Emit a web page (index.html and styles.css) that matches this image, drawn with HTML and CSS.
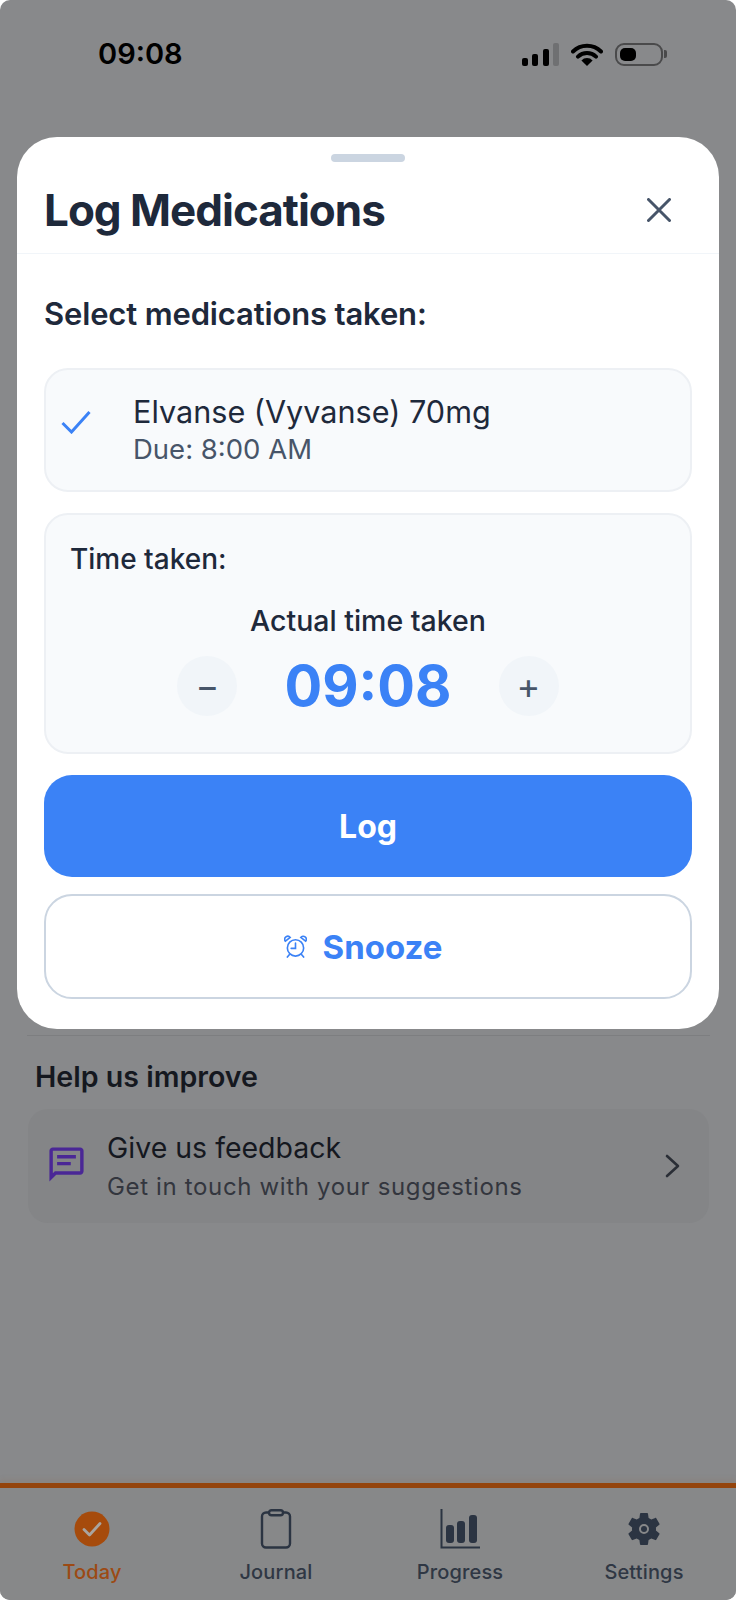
FILE: index.html
```html
<!DOCTYPE html>
<html lang="en">
<head>
    <meta charset="UTF-8">
    <meta name="viewport" content="width=device-width, initial-scale=1.0">
    <title>Log Medications</title>
    <link rel="stylesheet" href="styles.css">
</head>
<body>
    <div class="screen">
        <div class="status-bar">
            <span class="status-time">09:08</span>
            <div class="status-icons">
                <div class="signal">
                    <span class="bar bar-1"></span>
                    <span class="bar bar-2"></span>
                    <span class="bar bar-3"></span>
                    <span class="bar bar-4"></span>
                </div>
                <svg class="wifi" viewBox="0 0 32 23" width="32" height="23">
                    <path d="M2 8.5a20 20 0 0 1 28 0M7 13.6a13 13 0 0 1 18 0" fill="none" stroke="#000" stroke-width="4" stroke-linecap="round"/>
                    <path d="M16 23l-5.6-5.6a8 8 0 0 1 11.2 0z" fill="#000"/>
                </svg>
                <div class="battery"><span class="battery-fill"></span></div>
                <span class="battery-nub"></span>
            </div>
        </div>

        <section class="sheet">
            <div class="sheet-handle"></div>
            <header class="sheet-header">
                <h1>Log Medications</h1>
                <svg class="close-icon" viewBox="0 0 24 24" width="24" height="24">
                    <path d="M1.5 1.5l21 21M22.5 1.5l-21 21" fill="none" stroke="#475569" stroke-width="3" stroke-linecap="round"/>
                </svg>
            </header>
            <div class="sheet-body">
                <h2>Select medications taken:</h2>
                <div class="card med-card">
                    <svg class="check-icon" viewBox="0 0 30 24" width="30" height="24">
                        <path d="M1.5 13l9 9L28.500 2" fill="none" stroke="#3b82f6" stroke-width="3"/>
                    </svg>
                    <div>
                        <div class="med-name">Elvanse (Vyvanse) 70mg</div>
                        <div class="med-due">Due: 8:00 AM</div>
                    </div>
                </div>
                <div class="card time-card">
                    <div class="time-label">Time taken:</div>
                    <div class="time-sub">Actual time taken</div>
                    <div class="time-picker">
                        <span class="round-btn">&minus;</span>
                        <span class="time-value">09:08</span>
                        <span class="round-btn">+</span>
                    </div>
                </div>
                <button class="btn btn-log">Log</button>
                <button class="btn btn-snooze">
                    <svg viewBox="0 0 24 24" width="23" height="23" fill="none" stroke="#3b82f6" stroke-width="1.7" stroke-linecap="round">
                        <circle cx="12" cy="13.500" r="8.500"/>
                        <path d="M12 8.500v5.500H7.500M5.500 20.500L3.500 23M18.500 20.500l2 2.500"/>
                        <path d="M1.500 6.500a3 3 0 0 1 5-4zM22.500 6.500a3 3 0 0 0-5-4z"/>
                    </svg>
                    Snooze
                </button>
            </div>
        </section>

        <div class="bg-content">
            <h3>Help us improve</h3>
            <div class="feedback-card">
                <svg class="feedback-icon" viewBox="0 0 24 24" width="41" height="41" fill="#4a2796">
                    <path d="M20 2H4c-1.100 0-2 .9-2 2v18l4-4h14c1.100 0 2-.9 2-2V4c0-1.100-.9-2-2-2zm0 14H5.170L4 17.170V4h16v12z"/>
                    <path d="M6.500 6.500h11v2h-11zM6.500 10.500h8v2h-8z"/>
                </svg>
                <div class="feedback-text">
                    <div class="feedback-title">Give us feedback</div>
                    <div class="feedback-sub">Get in touch with your suggestions</div>
                </div>
                <svg class="chevron" viewBox="0 0 16 24" width="16" height="24">
                    <path d="M2 2l11 10L2 22" fill="none" stroke="#2a2e36" stroke-width="2.600" stroke-linecap="round" stroke-linejoin="round"/>
                </svg>
            </div>
        </div>

        <nav class="tab-bar">
            <div class="tab tab-active">
                <svg viewBox="0 0 40 40" width="40" height="40">
                    <circle cx="20" cy="20" r="17.500" fill="#a64b0c"/>
                    <path d="M12 20.500l5.500 5.500L28 14.500" fill="none" stroke="#a9a5a0" stroke-width="2.800" stroke-linecap="round" stroke-linejoin="round"/>
                </svg>
                <span>Today</span>
            </div>
            <div class="tab">
                <svg viewBox="0 0 40 40" width="40" height="40" fill="none" stroke="#2b3442" stroke-width="2.400">
                    <rect x="6" y="3.500" width="28" height="35" rx="4"/>
                    <rect x="13" y="1.200" width="14" height="5" rx="2.500" fill="#878889"/>
                </svg>
                <span>Journal</span>
            </div>
            <div class="tab">
                <svg viewBox="0 0 40 40" width="40" height="40" fill="#2b3442">
                    <path d="M1.500 0v38.500h38.500" fill="none" stroke="#2b3442" stroke-width="2"/>
                    <rect x="6" y="16" width="8" height="18" rx="3"/>
                    <rect x="17" y="12" width="8" height="22" rx="3"/>
                    <rect x="29" y="6" width="8" height="28" rx="3"/>
                </svg>
                <span>Progress</span>
            </div>
            <div class="tab">
                <svg viewBox="0 0 24 24" width="44" height="44" fill="#2b3442" fill-rule="evenodd">
                    <path d="M19.140 12.940c.04-.3.06-.61.06-.94 0-.32-.02-.64-.07-.94l2.030-1.580c.18-.14.23-.41.12-.61l-1.920-3.320c-.12-.22-.37-.29-.59-.22l-2.390.96c-.5-.38-1.030-.7-1.620-.94l-.36-2.540c-.04-.24-.24-.41-.48-.41h-3.840c-.24 0-.43.17-.47.41l-.36 2.540c-.59.24-1.130.57-1.620.94l-2.390-.96c-.22-.08-.47 0-.59.22L2.740 8.870c-.12.21-.08.47.12.61l2.030 1.580c-.05.3-.09.63-.09.94s.02.64.07.94l-2.030 1.580c-.18.14-.23.41-.12.61l1.920 3.320c.12.22.37.29.59.22l2.390-.96c.5.38 1.030.7 1.620.94l.36 2.540c.05.24.24.41.48.41h3.840c.24 0 .44-.17.47-.41l.36-2.540c.59-.24 1.130-.56 1.620-.94l2.390.96c.22.08.47 0 .59-.22l1.920-3.320c.12-.22.07-.47-.12-.61l-2.010-1.580zM12 15a3 3 0 1 1 0-6 3 3 0 0 1 0 6z"/>
                    <circle cx="12" cy="12" r="1.800"/>
                </svg>
                <span>Settings</span>
            </div>
        </nav>
    </div>
</body>
</html>
```
FILE: styles.css
```css
/* Reset */
* {
    margin: 0;
    padding: 0;
    box-sizing: border-box;
}

body {
    font-family: 'Inter', 'Liberation Sans', sans-serif;
    background-color: #fff;
    color: #1e293b;
}

.screen {
    width: 736px;
    height: 1600px;
    background-color: #88898b;
    border-radius: 10px;
    overflow: hidden;
    display: flex;
    flex-direction: column;
}

/* Status bar */
.status-bar {
    height: 137px;
    padding: 39px 69px 0 98px;
    display: flex;
    justify-content: space-between;
    align-items: flex-start;
}

.status-time {
    font-size: 29px;
    line-height: 30px;
    font-weight: 600;
    color: #000;
}

.status-icons {
    display: flex;
    align-items: center;
    height: 30px;
}

.signal {
    display: flex;
    align-items: flex-end;
    gap: 4.5px;
    height: 23px;
    margin-right: 12px;
}

.bar {
    width: 6px;
    background-color: #000;
    border-radius: 2px;
}

.bar-1 { height: 8px; }
.bar-2 { height: 12px; }
.bar-3 { height: 17px; }
.bar-4 { height: 23px; background-color: #6f7072; }

.wifi {
    margin-right: 12px;
}

.battery {
    width: 48px;
    height: 23px;
    padding: 3px;
    border: 2px solid #4a4a4b;
    border-radius: 9px;
}

.battery-fill {
    display: block;
    width: 16px;
    height: 100%;
    background-color: #000;
    border-radius: 5px;
}

.battery-nub {
    width: 3px;
    height: 8px;
    margin-left: 1px;
    background-color: #4a4a4b;
    border-radius: 0 2px 2px 0;
}

/* Modal sheet */
.sheet {
    margin: 0 17px;
    height: 892px;
    background-color: #fff;
    border-radius: 40px;
}

.sheet-handle {
    width: 74px;
    height: 8px;
    margin: 17px auto 0;
    background-color: #cbd5e1;
    border-radius: 4px;
}

.sheet-header {
    height: 92px;
    padding: 4px 48px 0 27px;
    display: flex;
    justify-content: space-between;
    align-items: center;
    border-bottom: 1px solid #f1f5f9;
}

.sheet-header h1 {
    font-size: 44px;
    font-weight: 700;
    letter-spacing: -1px;
}

.sheet-body {
    padding: 0 27px;
}

.sheet-body h2 {
    padding-top: 42px;
    font-size: 31px;
    line-height: 36px;
    font-weight: 600;
    letter-spacing: -0.15px;
}

.card {
    background-color: #f8fafc;
    border: 2px solid #edf0f4;
    border-radius: 24px;
}

.med-card {
    height: 124px;
    margin-top: 36px;
    padding: 0 15px;
    display: flex;
    align-items: center;
    gap: 42px;
}

.check-icon {
    flex: none;
    margin-bottom: 16px;
}

.med-name {
    font-size: 30.6px;
    line-height: 38px;
}

.med-due {
    font-size: 27.5px;
    line-height: 36px;
    color: #475569;
}

.time-card {
    height: 241px;
    margin-top: 21px;
    padding: 27px 24px 0;
}

.time-label {
    font-size: 28px;
    line-height: 34px;
    font-weight: 500;
}

.time-sub {
    margin-top: 28px;
    font-size: 28.5px;
    line-height: 34px;
    font-weight: 500;
    text-align: center;
}

.time-picker {
    margin-top: 18px;
    display: flex;
    justify-content: center;
    align-items: center;
    gap: 47px;
}

.round-btn {
    width: 60px;
    height: 60px;
    display: flex;
    justify-content: center;
    align-items: center;
    background-color: #f1f5f9;
    border-radius: 50%;
    font-size: 36px;
    color: #475569;
}

.time-value {
    font-size: 56px;
    line-height: 60px;
    font-weight: 700;
    color: #3b82f6;
}

.btn {
    width: 100%;
    display: flex;
    justify-content: center;
    align-items: center;
    font-family: inherit;
    font-weight: 700;
    border-radius: 28px;
    cursor: pointer;
}

.btn-log {
    height: 102px;
    margin-top: 21px;
    font-size: 32px;
    background-color: #3b82f6;
    color: #fff;
    border: none;
}

.btn-snooze {
    height: 105px;
    margin-top: 17px;
    padding-right: 10px;
    gap: 16px;
    font-size: 33px;
    background-color: #fff;
    color: #3b82f6;
    border: 2px solid #cbd5e1;
}

/* Page behind the sheet */
.bg-content {
    flex: 1;
    margin: 6px 26px 0 27px;
    border-top: 1px solid #7d7e80;
}

.bg-content h3 {
    margin-top: 21px;
    padding-left: 8px;
    font-size: 28.6px;
    line-height: 40px;
    font-weight: 600;
    color: #15181f;
}

.feedback-card {
    height: 114px;
    margin: 12px 1px 0 1px;
    padding: 0 28px 0 18px;
    display: flex;
    align-items: center;
    background-color: #848587;
    border-radius: 20px;
}

.feedback-icon {
    margin-bottom: 4px;
}

.feedback-text {
    flex: 1;
    margin-left: 20px;
    padding-top: 2px;
}

.feedback-title {
    font-size: 28.5px;
    line-height: 38px;
    color: #15181f;
}

.feedback-sub {
    margin-top: 2px;
    font-size: 24px;
    line-height: 36px;
    letter-spacing: 0.65px;
    color: #33363e;
}

/* Tab bar */
.tab-bar {
    height: 117px;
    border-top: 5px solid #94440c;
    display: grid;
    grid-template-columns: repeat(4, 1fr);
    background-color: #878889;
    box-shadow: 0 -4px 5px rgba(150, 100, 60, 0.12);
}

.tab {
    padding-top: 21px;
    display: flex;
    flex-direction: column;
    align-items: center;
    font-size: 20px;
    font-weight: 500;
    letter-spacing: 0.15px;
    color: #2f3744;
}

.tab svg {
    height: 40px;
    flex: none;
}

.tab span {
    margin-top: 10px;
    line-height: 26px;
}

.tab-active {
    color: #9c4a14;
}
```
